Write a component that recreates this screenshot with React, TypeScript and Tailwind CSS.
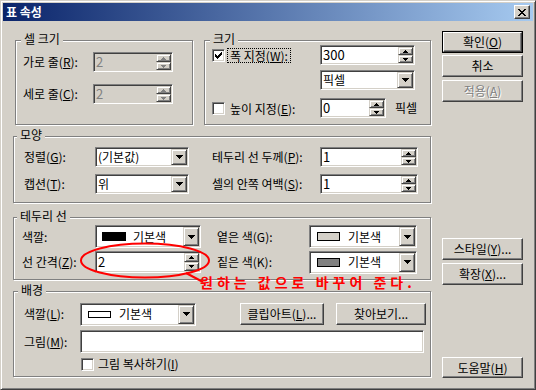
import React from 'react';

const sunken =
  "border border-t-[#808080] border-l-[#808080] border-b-white border-r-white shadow-[inset_1px_1px_0_#404040,inset_-1px_-1px_0_#d4d0c8]";
const raisedSmall =
  "border border-t-[#d4d0c8] border-l-[#d4d0c8] border-b-[#404040] border-r-[#404040] shadow-[inset_1px_1px_0_#ffffff,inset_-1px_-1px_0_#808080] bg-[#d4d0c8]";
const raisedBtn =
  "border border-t-white border-l-white border-b-[#404040] border-r-[#404040] shadow-[inset_-1px_-1px_0_#808080] bg-[#d4d0c8]";

function U({ children }: { children: React.ReactNode }) {
  return <span className="underline underline-offset-[1px] decoration-1">{children}</span>;
}

function Group({
  label,
  className = '',
  labelClass = 'left-[5px]',
  children,
}: {
  label: string;
  className?: string;
  labelClass?: string;
  children?: React.ReactNode;
}) {
  return (
    <div className={`relative border border-[#808080] shadow-[inset_1px_1px_0_#ffffff,1px_1px_0_#ffffff] ${className}`}>
      <span className={`absolute -top-[9px] ${labelClass} bg-[#d4d0c8] px-[3px] leading-[14px]`}>{label}</span>
      {children}
    </div>
  );
}

function DownArrow({ color = '#000' }: { color?: string }) {
  return (
    <svg width="7" height="4" viewBox="0 0 7 4" shapeRendering="crispEdges">
      <polygon points="0,0 7,0 3.5,4" fill={color} />
    </svg>
  );
}

function SmallUp({ color = '#000' }: { color?: string }) {
  return (
    <svg width="5" height="3" viewBox="0 0 5 3" shapeRendering="crispEdges">
      <rect x="2" y="0" width="1" height="1" fill={color} />
      <rect x="1" y="1" width="3" height="1" fill={color} />
      <rect x="0" y="2" width="5" height="1" fill={color} />
    </svg>
  );
}

function SmallDown({ color = '#000' }: { color?: string }) {
  return (
    <svg width="5" height="3" viewBox="0 0 5 3" shapeRendering="crispEdges">
      <rect x="0" y="0" width="5" height="1" fill={color} />
      <rect x="1" y="1" width="3" height="1" fill={color} />
      <rect x="2" y="2" width="1" height="1" fill={color} />
    </svg>
  );
}

function Check({ checked = false }: { checked?: boolean }) {
  return (
    <div className={`w-[13px] h-[13px] shrink-0 bg-white ${sunken} p-[1px] flex items-center justify-center`}>
      {checked && (
        <svg width="7" height="7" viewBox="0 0 7 7" shapeRendering="crispEdges">
          <rect x="6" y="0" width="1" height="1" fill="#000" />
          <rect x="5" y="1" width="2" height="1" fill="#000" />
          <rect x="0" y="2" width="1" height="1" fill="#000" />
          <rect x="4" y="2" width="3" height="1" fill="#000" />
          <rect x="0" y="3" width="2" height="1" fill="#000" />
          <rect x="3" y="3" width="3" height="1" fill="#000" />
          <rect x="0" y="4" width="5" height="1" fill="#000" />
          <rect x="1" y="5" width="3" height="1" fill="#000" />
          <rect x="2" y="6" width="1" height="1" fill="#000" />
        </svg>
      )}
    </div>
  );
}

function Spin({
  value,
  className,
  disabled = false,
}: {
  value: string;
  className: string;
  disabled?: boolean;
}) {
  const c = disabled ? '#808080' : '#000';
  return (
    <div className={`${sunken} ${disabled ? 'bg-[#d4d0c8]' : 'bg-white'} p-[1px] flex shrink-0 ${className}`}>
      <div className={`flex-1 flex items-center pl-[1px] text-[13px] ${disabled ? 'text-[#808080]' : 'text-black'}`}>
        {value}
      </div>
      <div className="w-[15px] flex flex-col">
        <div className={`flex-1 ${raisedSmall} flex items-center justify-center`}>
          <SmallUp color={c} />
        </div>
        <div className={`flex-1 ${raisedSmall} flex items-center justify-center`}>
          <SmallDown color={c} />
        </div>
      </div>
    </div>
  );
}

function Combo({ className, children }: { className: string; children: React.ReactNode }) {
  return (
    <div className={`${sunken} bg-white p-[1px] flex shrink-0 ${className}`}>
      <div className="flex-1 flex items-center pl-[1px] overflow-hidden whitespace-nowrap">{children}</div>
      <div className={`w-[16px] ${raisedSmall} flex items-center justify-center`}>
        <DownArrow />
      </div>
    </div>
  );
}

function Swatch({ className }: { className: string }) {
  return <span className={`inline-block border border-black ${className}`} />;
}

function Btn({
  children,
  className = '',
  def = false,
  disabled = false,
}: {
  children: React.ReactNode;
  className?: string;
  def?: boolean;
  disabled?: boolean;
}) {
  const inner = (
    <div
      className={`w-full h-full ${raisedBtn} flex items-center justify-center whitespace-nowrap ${
        disabled ? 'text-[#808080] [text-shadow:1px_1px_0_#ffffff]' : 'text-black'
      }`}
    >
      {children}
    </div>
  );
  if (def) {
    return <div className={`border border-black ${className}`}>{inner}</div>;
  }
  return <div className={className}>{inner}</div>;
}

export default function App() {
  return (
    <div className="font-['Noto_Sans_CJK_KR','Noto_Sans',sans-serif] relative w-[536px] h-[390px] overflow-hidden bg-[#d4d0c8] text-[12px] leading-[14px] text-black border border-t-[#d4d0c8] border-l-[#d4d0c8] border-b-[#404040] border-r-[#404040] shadow-[inset_1px_1px_0_#ffffff,inset_-1px_-1px_0_#808080] p-[2px]">
      {/* Title bar */}
      <div className="h-[18px] flex items-center justify-between bg-[linear-gradient(to_right,#0a246a,#a6caf0)] pl-[3px] pr-[3px]">
        <span className="text-white font-bold text-[12px] leading-[14px]">표 속성</span>
        <div className={`w-[16px] h-[14px] ${raisedBtn} flex items-center justify-center`}>
          <svg width="8" height="7" viewBox="0 0 8 7" shapeRendering="crispEdges">
            <path
              d="M0 0h2v1h1v1h2v-1h1v-1h2v1h-1v1h-1v1h-1v1h1v1h1v1h1v1h-2v-1h-1v-1h-2v1h-1v1h-2v-1h1v-1h1v-1h1v-1h-1v-1h-1v-1h-1z"
              fill="#000"
            />
          </svg>
        </div>
      </div>

      <div className="flex">
        {/* Left column */}
        <div className="ml-[10px] w-[418px] flex flex-col">
          <div className="flex mt-[19px]">
            <Group label="셀 크기" className="ml-[2px] w-[178px] h-[85px]" labelClass="left-[5px]">
              <div className="flex flex-col pl-[7px] pt-[11px]">
                <div className="flex items-center h-[20px]">
                  <span className="w-[70px]">
                    가로 줄(<U>R</U>):
                  </span>
                  <Spin value="2" disabled className="w-[80px] h-[20px]" />
                </div>
                <div className="flex items-center h-[20px] mt-[12px]">
                  <span className="w-[70px]">
                    세로 줄(<U>C</U>):
                  </span>
                  <Spin value="2" disabled className="w-[80px] h-[20px]" />
                </div>
              </div>
            </Group>
            <Group label="크기" className="ml-[11px] w-[227px] h-[85px]" labelClass="left-[5px]">
              <div className="flex flex-col pl-[7px] pt-[4px]">
                <div className="flex items-center h-[20px]">
                  <div className="w-[108px] flex items-center">
                    <Check checked />
                    <span className="ml-[2px] border border-dotted border-black px-[2px] leading-[13px]">
                      폭 지정(<U>W</U>):
                    </span>
                  </div>
                  <Spin value="300" className="w-[95px] h-[20px]" />
                </div>
                <div className="flex items-center h-[20px] mt-[5px]">
                  <div className="w-[108px]" />
                  <Combo className="w-[95px] h-[20px]">픽셀</Combo>
                </div>
                <div className="flex items-center h-[20px] mt-[8px]">
                  <div className="w-[108px] flex items-center">
                    <Check />
                    <span className="ml-[2px] border border-transparent px-[2px] leading-[13px]">
                      높이 지정(<U>E</U>):
                    </span>
                  </div>
                  <Spin value="0" className="w-[66px] h-[20px]" />
                  <span className="ml-[9px]">픽셀</span>
                </div>
              </div>
            </Group>
          </div>

          <Group label="모양" className="mt-[11px] w-[418px] h-[67px]" labelClass="left-[3px]">
            <div className="flex flex-col pl-[10px] pt-[10px]">
              <div className="flex items-center h-[20px]">
                <span className="w-[71px]">
                  정렬(<U>G</U>):
                </span>
                <Combo className="w-[94px] h-[20px]">(기본값)</Combo>
                <span className="ml-[23px] w-[108px]">
                  테두리 선 두께(<U>P</U>):
                </span>
                <Spin value="1" className="w-[98px] h-[20px]" />
              </div>
              <div className="flex items-center h-[20px] mt-[7px]">
                <span className="w-[71px]">
                  캡션(<U>T</U>):
                </span>
                <Combo className="w-[94px] h-[20px]">위</Combo>
                <span className="ml-[23px] w-[108px]">
                  셀의 안쪽 여백(<U>S</U>):
                </span>
                <Spin value="1" className="w-[98px] h-[20px]" />
              </div>
            </div>
          </Group>

          <Group label="테두리 선" className="mt-[14px] w-[418px] h-[63px]" labelClass="left-[3px]">
            <div className="flex flex-col pl-[8px] pt-[7px]">
              <div className="flex items-center h-[23px]">
                <span className="w-[73px]">색깔:</span>
                <Combo className="w-[106px] h-[23px]">
                  <span className="flex items-center pl-[4px]">
                    <Swatch className="w-[24px] h-[9px] bg-black" />
                    <span className="ml-[7px]">기본색</span>
                  </span>
                </Combo>
                <span className="ml-[16px] w-[92px]">옅은 색(G):</span>
                <Combo className="w-[108px] h-[23px]">
                  <span className="flex items-center pl-[5px]">
                    <Swatch className="w-[23px] h-[9px] bg-[#d4d0c8] border-[#404040]" />
                    <span className="ml-[8px]">기본색</span>
                  </span>
                </Combo>
              </div>
              <div className="flex items-center h-[22px] mt-[3px]">
                <span className="w-[73px]">
                  선 간격(<U>Z</U>):
                </span>
                <Spin value="2" className="w-[106px] h-[22px]" />
                <span className="ml-[16px] w-[92px]">짙은 색(K):</span>
                <Combo className="w-[108px] h-[23px]">
                  <span className="flex items-center pl-[5px]">
                    <Swatch className="w-[23px] h-[9px] bg-[#808080] border-[#404040]" />
                    <span className="ml-[8px]">기본색</span>
                  </span>
                </Combo>
              </div>
            </div>
          </Group>

          <Group label="배경" className="mt-[11px] w-[418px] h-[86px]" labelClass="left-[4px]">
            <div className="flex flex-col pl-[10px] pt-[11px]">
              <div className="flex items-center h-[22px]">
                <span className="w-[56px]">
                  색깔(<U>L</U>):
                </span>
                <Combo className="w-[116px] h-[23px]">
                  <span className="flex items-center pl-[5px]">
                    <Swatch className="w-[23px] h-[7px] bg-white" />
                    <span className="ml-[8px]">기본색</span>
                  </span>
                </Combo>
                <Btn className="ml-[44px] w-[84px] h-[22px]">
                  클립아트(<U>L</U>)...
                </Btn>
                <Btn className="ml-[12px] w-[90px] h-[22px]">찾아보기...</Btn>
              </div>
              <div className="flex items-center h-[23px] mt-[5px]">
                <span className="w-[56px]">
                  그림(<U>M</U>):
                </span>
                <div className={`${sunken} bg-white w-[344px] h-[23px]`} />
              </div>
              <div className="flex items-center h-[14px] mt-[4px] pl-[57px]">
                <Check />
                <span className="ml-[4px]">
                  그림 복사하기(<U>I</U>)
                </span>
              </div>
            </div>
          </Group>
        </div>

        {/* Right column */}
        <div className="ml-[11px] w-[81px] flex flex-col">
          <Btn def className="mt-[10px] w-[81px] h-[22px]">
            확인(<U>O</U>)
          </Btn>
          <Btn className="mt-[2px] w-[81px] h-[22px]">취소</Btn>
          <Btn disabled className="mt-[3px] w-[81px] h-[22px]">
            적용(<U>A</U>)
          </Btn>
          <Btn className="mt-[136px] w-[81px] h-[22px]">
            스타일(<U>Y</U>)...
          </Btn>
          <Btn className="mt-[3px] w-[81px] h-[22px]">
            확장(<U>X</U>)...
          </Btn>
          <Btn className="mt-[72px] w-[81px] h-[21px]">
            도움말(<U>H</U>)
          </Btn>
        </div>
      </div>

      {/* Red annotation */}
      <svg
        className="absolute -left-px -top-px pointer-events-none"
        width="536"
        height="390"
        viewBox="0 0 536 390"
      >
        <ellipse cx="145" cy="260.5" rx="64" ry="17" fill="none" stroke="#ff0000" strokeWidth="2" />
        <line x1="186" y1="273" x2="203" y2="282" stroke="#ff0000" strokeWidth="2" />
      </svg>
      <span className="absolute left-[199px] top-[274px] text-[14px] leading-[15px] font-bold text-[#ff0000] tracking-[4px] whitespace-nowrap">
        원하는 값으로 바꾸어 준다.
      </span>
    </div>
  );
}
